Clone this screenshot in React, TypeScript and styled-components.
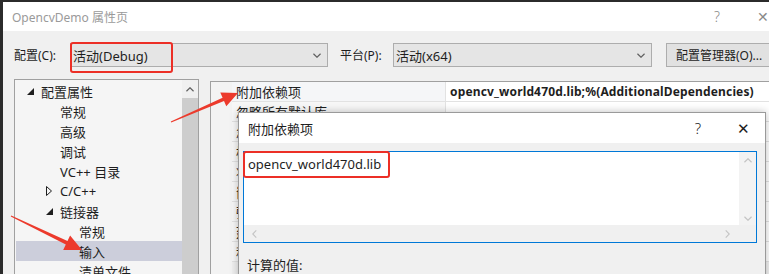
import styled, { createGlobalStyle } from "styled-components";

const GlobalStyle = createGlobalStyle`
html, body {
    margin: 0;
    padding: 0;
    background: #2b2b2b;
    overflow: hidden;
}
body {
    font-family: "Noto Sans", "Noto Sans CJK SC", sans-serif;
    font-size: 12px;
    color: #1e1e1e;
}
`;

const Page = styled.div`
position: relative;
width: 769px;
height: 274px;
overflow: hidden;
`;

const Window = styled.div`
margin: 2px 0 0 3px;
height: 272px;
background: #f0f0f0;
display: flex;
flex-direction: column;
overflow: hidden;
`;

const TitleBar = styled.div`
height: 29px;
flex-shrink: 0;
background: #ffffff;
display: flex;
align-items: center;
padding-left: 9px;
`;

const Title = styled.div`
flex: 1;
color: #9a9a9a;
font-size: 12px;
`;

const TitleBtn = styled.div<{ $w: number }>`
width: ${p => p.$w}px;
flex-shrink: 0;
text-align: center;
color: #8a8a8a;
font-size: 14px;
font-weight: 300;
`;

const Body = styled.div`
flex: 1;
display: flex;
flex-direction: column;
padding: 12px 0 0 11px;
`;

const ConfigRow = styled.div`
display: flex;
align-items: center;
height: 24px;
`;

const Label = styled.div<{ $w: number }>`
width: ${p => p.$w}px;
flex-shrink: 0;
`;

const Combo = styled.div<{ $w: number; $gap?: number }>`
width: ${p => p.$w}px;
height: 24px;
flex-shrink: 0;
box-sizing: border-box;
margin-right: ${p => p.$gap || 0}px;
background: #e5e5e5;
border: 1px solid #adadad;
display: flex;
align-items: center;
padding: 0 6px 0 2px;
font-size: 13px;
span { flex: 1; }
`;

const Button = styled.div`
width: 120px;
height: 24px;
flex-shrink: 0;
box-sizing: border-box;
background: #e1e1e1;
border: 1px solid #adadad;
display: flex;
align-items: center;
padding-left: 9px;
font-size: 12px;
`;

const Main = styled.div`
flex: 1;
display: flex;
gap: 11px;
margin-top: 12px;
min-height: 0;
`;

const TreePanel = styled.div`
width: 185px;
flex-shrink: 0;
box-sizing: border-box;
border: 1px solid #a0a0a0;
border-bottom: none;
background: #f5f5f5;
display: flex;
`;

const TreeList = styled.div`
flex: 1;
padding-top: 1px;
`;

const TreeRow = styled.div<{ $level: number; $selected?: boolean }>`
height: 20px;
display: flex;
align-items: center;
padding-left: ${p => 11 + p.$level * 19}px;
margin-left: 1px;
background: ${p => (p.$selected ? "#cccedb" : "transparent")};
font-size: 13px;
`;

const ToggleSlot = styled.div`
width: 14px;
flex-shrink: 0;
display: flex;
align-items: center;
`;

const Scrollbar = styled.div`
width: 16px;
flex-shrink: 0;
background: #f0f0f0;
display: flex;
flex-direction: column;
align-items: center;
`;

const ScrollArrow = styled.div`
height: 18px;
display: flex;
align-items: center;
justify-content: center;
`;

const ScrollThumb = styled.div`
flex: 1;
width: 16px;
background: #cdcdcd;
`;

const GridPanel = styled.div`
flex: 1;
margin-top: 2px;
border-top: 1px solid #a0a0a0;
border-left: 1px solid #a0a0a0;
background: #f0f0f0;
display: flex;
`;

const Gutter = styled.div`
width: 21px;
flex-shrink: 0;
background: #f3f3f3;
`;

const Rows = styled.div`
flex: 1;
`;

const PropRow = styled.div`
display: grid;
grid-template-columns: 214px 1fr;
height: 19px;
border-bottom: 1px solid #e2e2e2;
`;

const PropName = styled.div<{ $first?: boolean }>`
background: ${p => (p.$first ? "#f5f6f8" : "#f7f7f7")};
padding-left: 4px;
display: flex;
align-items: center;
font-size: 13px;
white-space: nowrap;
border-right: 1px solid #e2e2e2;
`;

const PropValue = styled.div`
background: #ffffff;
padding-left: 4px;
display: flex;
align-items: center;
font-weight: 700;
font-size: 12px;
letter-spacing: 0.15px;
white-space: nowrap;
`;

const Dialog = styled.div`
position: absolute;
left: 238px;
top: 112px;
width: 528px;
height: 170px;
box-sizing: border-box;
border: 1px solid #9a9a9a;
box-shadow: 0 0 8px rgba(0, 0, 0, 0.25);
background: #f0f0f0;
display: flex;
flex-direction: column;
`;

const DialogTitle = styled.div`
height: 30px;
background: #ffffff;
display: flex;
align-items: center;
padding-left: 9px;
font-size: 13px;
`;

const DialogTitleText = styled.div`
flex: 1;
`;

const DialogBtn = styled.div<{ $w: number }>`
width: ${p => p.$w}px;
flex-shrink: 0;
text-align: center;
color: #1e1e1e;
font-size: 15px;
font-weight: 300;
`;

const DialogBody = styled.div`
padding: 8px 8px 0 4px;
`;

const Editor = styled.div`
position: relative;
height: 92px;
box-sizing: border-box;
border: 1px solid #0078d7;
background: #ffffff;
display: grid;
grid-template-columns: 1fr 17px;
grid-template-rows: 1fr 17px;
`;

const EditorText = styled.div`
padding: 3px 0 0 4px;
font-size: 13px;
line-height: 18px;
`;

const VScroll = styled.div`
background: #f3f3f3;
display: flex;
flex-direction: column;
justify-content: space-between;
align-items: center;
padding: 6px 0 4px;
`;

const HScroll = styled.div`
background: #f0f0f0;
display: flex;
justify-content: space-between;
align-items: center;
padding: 0 9px 0 8px;
`;

const Corner = styled.div`
background: #f0f0f0;
`;

const Highlight = styled.div<{ $l: number; $t: number; $w: number; $h: number }>`
position: absolute;
left: ${p => p.$l}px;
top: ${p => p.$t}px;
width: ${p => p.$w}px;
height: ${p => p.$h}px;
box-sizing: border-box;
border: 2px solid #ec2f26;
border-radius: 3px;
pointer-events: none;
`;

const Computed = styled.div`
padding: 12px 0 0 4px;
font-size: 13px;
`;

const Overlay = styled.svg`
position: absolute;
left: 0;
top: 0;
pointer-events: none;
`;

function Chevron({ dir, color = "#606060", size = 8 }: { dir: "up" | "down" | "left" | "right"; color?: string; size?: number }) {
    const h = size / 2;
    const pts = {
        down: `0,0 ${h},${h} ${size},0`,
        up: `0,${h} ${h},0 ${size},${h}`,
        left: `${h},0 0,${h} ${h},${size}`,
        right: `0,0 ${h},${h} 0,${size}`,
    }[dir];
    const vertical = dir === "up" || dir === "down";
    return (
        <svg width={vertical ? size : h + 1} height={vertical ? h + 1 : size} viewBox={`-0.5 -0.5 ${vertical ? size + 1 : h + 1} ${vertical ? h + 1 : size + 1}`}>
            <polyline points={pts} fill="none" stroke={color} strokeWidth={1.3} />
        </svg>
    );
}

function Toggle({ open }: { open: boolean }) {
    return open ? (
        <svg width="7" height="7" viewBox="0 0 7 7"><polygon points="7,0 7,7 0,7" fill="#1e1e1e" /></svg>
    ) : (
        <svg width="6" height="10" viewBox="0 0 6 10"><polygon points="0.5,0.5 5.5,5 0.5,9.5" fill="none" stroke="#1e1e1e" /></svg>
    );
}

function arrow(tail: [number, number], tip: [number, number], headLen: number, headHalf: number, shaftHalf: number) {
    const dx = tip[0] - tail[0];
    const dy = tip[1] - tail[1];
    const len = Math.hypot(dx, dy);
    const ux = dx / len, uy = dy / len;
    const nx = -uy, ny = ux;
    const bx = tip[0] - ux * headLen, by = tip[1] - uy * headLen;
    const p = (x: number, y: number) => `${x.toFixed(1)},${y.toFixed(1)}`;
    return [
        p(tail[0] + nx * 0.4, tail[1] + ny * 0.4),
        p(bx + nx * shaftHalf, by + ny * shaftHalf),
        p(bx + nx * headHalf, by + ny * headHalf),
        p(tip[0], tip[1]),
        p(bx - nx * headHalf, by - ny * headHalf),
        p(bx - nx * shaftHalf, by - ny * shaftHalf),
        p(tail[0] - nx * 0.4, tail[1] - ny * 0.4),
    ].join(" ");
}

const tree = [
    { label: "配置属性", level: 0, toggle: "open" },
    { label: "常规", level: 1 },
    { label: "高级", level: 1 },
    { label: "调试", level: 1 },
    { label: "VC++ 目录", level: 1 },
    { label: "C/C++", level: 1, toggle: "closed" },
    { label: "链接器", level: 1, toggle: "open" },
    { label: "常规", level: 2 },
    { label: "输入", level: 2, selected: true },
    { label: "清单文件", level: 2 },
];

const props = [
    ["附加依赖项", "opencv_world470d.lib;%(AdditionalDependencies)"],
    ["忽略所有默认库", ""],
    ["忽略特定默认库", ""],
    ["模块定义文件", ""],
    ["将模块添加到程序集", ""],
    ["嵌入托管资源文件", ""],
    ["强制符号引用", ""],
    ["延迟加载的 DLL", ""],
    ["程序集链接资源", ""],
];

export default function App() {
    return (
        <Page>
            <GlobalStyle />
            <Window>
                <TitleBar>
                    <Title>OpencvDemo 属性页</Title>
                    <TitleBtn $w={80}>?</TitleBtn>
                    <TitleBtn $w={12}>✕</TitleBtn>
                </TitleBar>
                <Body>
                    <ConfigRow>
                        <Label $w={56}>配置(C):</Label>
                        <Combo $w={258} $gap={12}><span>活动(Debug)</span><Chevron dir="down" /></Combo>
                        <Label $w={53}>平台(P):</Label>
                        <Combo $w={259} $gap={14}><span>活动(x64)</span><Chevron dir="down" /></Combo>
                        <Button>配置管理器(O)...</Button>
                    </ConfigRow>
                    <Main>
                        <TreePanel>
                            <TreeList>
                                {tree.map((t, i) => (
                                    <TreeRow key={i} $level={t.level} $selected={t.selected}>
                                        <ToggleSlot>{t.toggle && <Toggle open={t.toggle === "open"} />}</ToggleSlot>
                                        {t.label}
                                    </TreeRow>
                                ))}
                            </TreeList>
                            <Scrollbar>
                                <ScrollArrow><Chevron dir="up" color="#606060" /></ScrollArrow>
                                <ScrollThumb />
                            </Scrollbar>
                        </TreePanel>
                        <GridPanel>
                            <Gutter />
                            <Rows>
                                {props.map(([name, value], i) => (
                                    <PropRow key={i}>
                                        <PropName $first={i === 0}>{name}</PropName>
                                        <PropValue>{value}</PropValue>
                                    </PropRow>
                                ))}
                            </Rows>
                        </GridPanel>
                    </Main>
                </Body>
            </Window>

            <Dialog>
                <DialogTitle>
                    <DialogTitleText>附加依赖项</DialogTitleText>
                    <DialogBtn $w={46}>?</DialogBtn>
                    <DialogBtn $w={44}>✕</DialogBtn>
                </DialogTitle>
                <DialogBody>
                    <Editor>
                        <EditorText>opencv_world470d.lib</EditorText>
                        <VScroll>
                            <Chevron dir="up" color="#c4c4c4" />
                            <Chevron dir="down" color="#c4c4c4" />
                        </VScroll>
                        <HScroll>
                            <Chevron dir="left" color="#c4c4c4" />
                            <Chevron dir="right" color="#c4c4c4" />
                        </HScroll>
                        <Corner />
                        <Highlight $l={-1} $t={-1} $w={147} $h={27} />
                    </Editor>
                    <Computed>计算的值:</Computed>
                </DialogBody>
            </Dialog>

            <Highlight $l={70} $t={42} $w={103} $h={31} />

            <Overlay width="769" height="274" viewBox="0 0 769 274">
                <polygon points={arrow([171, 122], [238, 93], 16, 7.5, 1.8)} fill="#ec3a2c" />
                <polygon points={arrow([11, 216], [82, 250], 17, 8, 2)} fill="#ec3a2c" />
            </Overlay>
        </Page>
    );
}
